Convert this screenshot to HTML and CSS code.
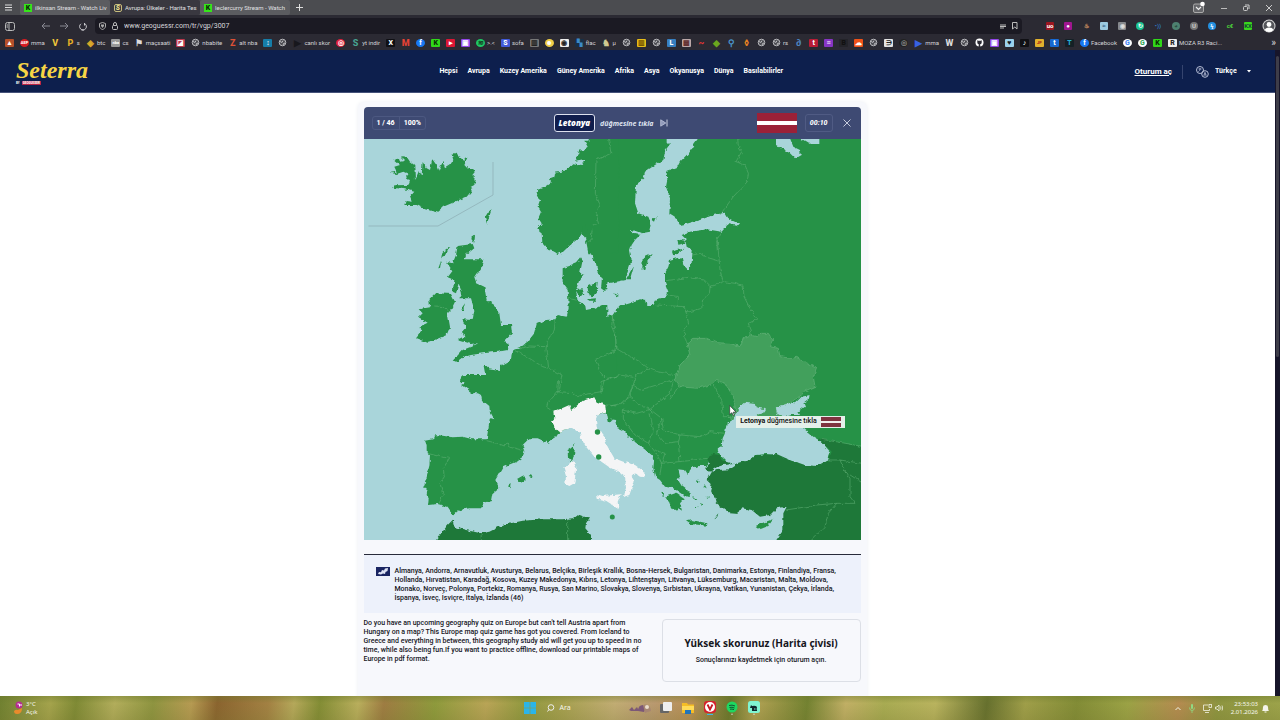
FILE: index.html
```html
<!DOCTYPE html>
<html lang="tr">
<head>
<meta charset="utf-8">
<title>Avrupa: Ülkeler - Harita Testi</title>
<link rel="stylesheet" href="styles.css">
</head>
<body>
<div class="tabs">
  <button class="menu" aria-label="Menü"><svg width="7" height="7" viewBox="0 0 7 7"><path d="M0 1h7M0 3.500h7M0 6h7" stroke="#ddd"/></svg></button>
  <button class="tab"><i class="fav kick">K</i><span>ilkinsan Stream - Watch Liv</span></button>
  <button class="tab active"><i class="fav set">S</i><span>Avrupa: Ülkeler - Harita Tes</span></button>
  <button class="tab"><i class="fav kick">K</i><span>leclercurry Stream - Watch</span></button>
  <button class="plus" aria-label="Yeni sekme"><svg width="7" height="7" viewBox="0 0 7 7"><path d="M0 3.500h7M3.500 0v7" stroke="#ddd"/></svg></button>
  <div class="wincontrols">
    <svg width="12" height="13" viewBox="0 0 12 13"><rect x=".5" y="3" width="10" height="8.500" rx="1.500" fill="#66676b" stroke="#aaa"/><path d="M3 6l2.500 2.500L8 6" fill="none" stroke="#eee" stroke-width="1.200"/><circle cx="9.500" cy="3" r="2.300" fill="#fff"/></svg>
    <svg width="6" height="8" viewBox="0 0 6 8"><path d="M0 4.500h6" stroke="#bbb"/></svg>
    <svg width="7" height="8" viewBox="0 0 7 8"><rect x=".5" y="2.500" width="4" height="4" fill="none" stroke="#ccc" rx="1"/><path d="M2 1h4v4" fill="none" stroke="#ccc"/></svg>
    <svg width="6" height="8" viewBox="0 0 6 8"><path d="M0 1l6 6M6 1L0 7" stroke="#ccc"/></svg>
  </div>
</div>
<div class="toolbar">
  <svg class="side" width="10" height="9" viewBox="0 0 10 9"><rect x=".5" y=".5" width="9" height="8" rx="2" fill="none" stroke="#bbb"/><path d="M4 .5v8M1.500 3h1.500M1.500 5h1.500" stroke="#bbb"/></svg>
  <svg width="9" height="8" viewBox="0 0 9 8"><path d="M9 4H1M4 1L1 4l3 3" fill="none" stroke="#888892"/></svg>
  <svg width="9" height="8" viewBox="0 0 9 8"><path d="M0 4h8M5 1l3 3-3 3" fill="none" stroke="#888892"/></svg>
  <svg width="8" height="9" viewBox="0 0 8 9"><path d="M5.500 1.500A3.400 3.400 0 1 1 2 1.800M5.500 1v2.500M2.500 8L5 8" fill="none" stroke="#c8c8cc"/></svg>
  <div class="url">
    <svg width="7" height="8" viewBox="0 0 7 8"><path d="M.5 1.500L3.500.5l3 1v2.500c0 2-1.500 3-3 3.500-1.500-.5-3-1.500-3-3.500z" fill="none" stroke="#aaa"/><path d="M2 2.500h3v1.500L3.500 6 2 4z" fill="#aaa"/></svg>
    <svg width="6" height="8" viewBox="0 0 6 8"><rect x=".5" y="3.500" width="5" height="4" rx="1" fill="none" stroke="#bbb"/><path d="M1.500 3.500V2a1.500 1.500 0 0 1 3 0v1.500" fill="none" stroke="#bbb"/></svg>
    <input type="text" aria-label="Adres" value="www.geoguessr.com/tr/vgp/3007">
    <svg width="6" height="7" viewBox="0 0 6 7"><path d="M0 2h6M0 3.500h6M0 5h4" stroke="#bbb"/></svg>
    <svg width="6" height="8" viewBox="0 0 6 8"><path d="M.5.500h4.500v6.500L2.800 5 .5 7z" fill="none" stroke="#bbb"/></svg>
  </div>
  <div class="ext">
    <i style="background:#9d1620;color:#fff">uo</i><i style="background:#a01690;color:#fff">●</i><i style="color:#e5a36c">♨</i><i style="background:#9ccbe0;color:#37658a">≈</i><i style="background:#85888c;color:#ddd">◉</i><i class="c" style="background:#1cc391;color:#fff">↻</i><i style="color:#2e72bd">•))</i><i class="c" style="background:#4d8170;color:#2c4f43">◕</i><i class="c" style="background:#777;color:#ccc">U</i><i class="c" style="background:#2390e0;color:#fff">ϟ</i><i style="color:#4bd33a">c€</i><i style="background:#39d51e;color:#143">KX</i>
    <svg width="14" height="14" viewBox="0 0 14 14"><circle cx="7" cy="7" r="6.500" fill="#d9d9d9"/><circle cx="7" cy="7" r="5.500" fill="#55565b"/><circle cx="7" cy="5.500" r="2.400" fill="#fff"/><path d="M2.800 11c.5-3.500 7.900-3.500 8.400 0a5.500 5.500 0 0 1-8.400 0" fill="#fff"/></svg>
  </div>
</div>
<nav class="marks" id="marks" aria-label="Yer imleri"></nav>

<div class="viewport">
  <div class="page">
    <header class="site">
      <a class="logo" href="#"><span class="word">Seterra</span><span class="by"><span>BY</span><b>GEOGUESSR</b></span></a>
      <nav class="links"><a href="#">Hepsi</a><a href="#">Avrupa</a><a href="#">Kuzey Amerika</a><a href="#">Güney Amerika</a><a href="#">Afrika</a><a href="#">Asya</a><a href="#">Okyanusya</a><a href="#">Dünya</a><a href="#">Basılabilirler</a></nav>
      <div class="account">
        <a href="#">Oturum aç</a>
        <label class="lang"><svg width="13" height="12" viewBox="0 0 13 12" fill="none" stroke="#b6bed6"><circle cx="4" cy="4" r="3.500"/><circle cx="9" cy="8" r="3.300"/><path d="M2.500 3h3M4 2v1c0 1.500-.8 2.200-1.500 2.500M7.700 9.600L9 6.300l1.300 3.300M8 9h2" stroke-width=".8"/></svg>
        <select aria-label="Dil"><option>Türkçe</option></select><svg width="4" height="3" viewBox="0 0 4 3"><path d="M0 0h4L2 2.500z" fill="#fff"/></svg></label>
      </div>
    </header>
    <main>
      <section class="panel">
        <div class="game">
          <div class="bar">
            <div class="score"><span>1 / 46</span><span>100%</span></div>
            <div class="ask"><b>Letonya</b><span>düğmesine tıkla</span><button aria-label="Atla"><svg width="8" height="8" viewBox="0 0 8 8"><path d="M.7.800L5.800 4 .7 7.200z" fill="#8f99ba" stroke="#c9cfe2" stroke-width=".7"/><path d="M7 .5v7" stroke="#c9cfe2"/></svg></button></div>
            <div class="right"><i class="flag"></i><span class="time">00:10</span><button aria-label="Kapat"><svg width="8" height="8" viewBox="0 0 8 8"><path d="M.5.500l7 7M7.500.5l-7 7" stroke="#d5d9e8" stroke-width=".9"/></svg></button></div>
          </div>
          <div class="map">
            <svg viewBox="364 139 497 401" role="img" aria-label="Avrupa haritası">
              <defs><filter id="coast" x="0" y="0" width="1" height="1" color-interpolation-filters="sRGB"><feTurbulence type="fractalNoise" baseFrequency=".22" numOctaves="2" seed="4"/><feDisplacementMap in="SourceGraphic" scale="4" xChannelSelector="R" yChannelSelector="G"/></filter></defs>
              <rect x="364" y="139" width="497" height="401" fill="#a9d5da"/>
              <g filter="url(#coast)">
                <rect x="350" y="125" width="525" height="430" fill="#a9d5da"/>
                <g class="land">
                  <rect x="610" y="125" width="270" height="265"/>
                  <g transform="translate(355 100) scale(.33333)">
                    <path d="M103 218L125 215 118 200 135 195 118 180 128 176 138 182 150 180 138 168 155 170 165 185 178 195 180 240 192 212 200 225 203 186 215 205 225 210 232 178 248 200 253 212 262 182 270 205 285 195 295 180 290 162 305 158 315 178 330 182 328 168 337 173 328 192 340 205 360 215 352 225 363 238 358 255 345 262 350 272 335 290 300 305 265 320 245 337 210 328 185 315 148 315 152 303 170 305 165 290 178 275 150 268 115 263 118 256 160 255 165 240 150 235 160 222 145 215 125 222z"/>
                    <path d="M790 90H710L700 122 688 122 698 140 685 150 672 152 665 170 660 185 690 180 680 195 655 190 640 205 620 215 600 218 598 232 582 238 590 248 570 262 550 270 545 290 555 300 548 320 558 335 550 355 560 370 550 385 560 400 562 430 580 450 620 460 650 430 672 405 678 392 690 410 700 460H790z"/>
                    <path d="M390 352L400 335 410 328 402 352 396 372z"/>
                  </g>
                  <g transform="translate(356 230) scale(.33333)">
                    <path d="M550 5L565 15 558 25 575 50 605 72 625 60 650 40 672 20 680 2V-15H550zM688-15L700 50 705 75 718 95 725 125 738 145 735 175 745 182 768 178V-15z"/>
                    <path d="M782 240H768L755 225 735 225 715 235 690 240 688 228 665 215 660 180 670 150 685 135 672 130 680 90 675 82 660 100 640 108 620 115 620 160 635 180 637 210 638 235 632 260 605 255 598 268 570 270 542 282 535 310 515 335 490 355 468 362 465 390 432 408 432 420 398 415 392 408 383 408 390 445 360 450 350 443 312 450 325 460 315 465 330 475 350 490H782z"/>
                    <path d="M658 180L680 178 685 195 670 198zM692 172L725 155 722 185 710 200 695 190zM690 208L720 205 718 215 700 215z"/>
                    <path d="M305 48L350 42 355 55 330 75 325 88 382 88 375 115 355 145 360 158 385 170 392 210 415 225 430 250 435 285 465 285 468 310 445 335 460 345 455 360 425 365 380 370 345 375 325 380 305 395 290 392 320 360 345 350 367 340 345 342 305 330 325 320 318 305 330 292 318 268 350 270 355 240 345 205 310 205 318 190 308 160 300 190 290 185 295 150 275 142 290 122 270 95 290 100 300 75z"/>
                    <path d="M188 238L222 232 220 210 240 190 285 192 297 215 285 240 275 250 282 290 272 315 215 338 180 325 200 300 190 290 215 278 188 262 200 250zM260 65L280 50 265 80 256 85zM247 115L256 90 252 115zM346 20L357 12 355 38 348 30zM313 240L327 220 322 240z"/>
                  </g>
                  <g transform="translate(356 380) scale(.33333)">
                    <path d="M320-15L312 0 325 8 330 25 350 30 375 45 378 60 400 78 402 100 412 118 402 115 392 178 350 178 320 170 290 172 250 166 235 166 230 178 207 182 212 195 212 215 222 222 220 260 210 300 202 322 215 325 212 345 218 355 216 375 245 372 275 380 292 405 310 390 340 385 375 385 385 368 408 362 412 340 430 325 418 300 440 262 480 245 500 230 505 215 500 195 520 175 545 175 575 188 600 172 610 155 640 145 700 110 750 100 755 125 765 122 770 112 782 120V-15z"/>
                    <path d="M635 210L650 200 653 188 656 215 648 247 636 235zM483 297L500 287 510 297 498 308zM518 288L530 292 525 282zM456 318L464 312 462 325z"/>
                  </g>
                  <g transform="translate(610 380) scale(.33333)">
                    <path d="M0-15V118L15 120 20 140 40 150 60 175 100 205 125 225 132 245 130 265 135 290 150 300 165 320 190 325 220 345 240 352 238 335 215 318 203 298 210 290 205 268 225 270 235 285 240 270 250 262 270 258 290 258 300 240 400 250H780V-15z"/>
                    <path d="M165 350L200 338 224 355 210 370 216 392 205 385 198 396 190 385 184 390 180 372zM228 424L245 420 292 430 290 437 240 432zM437 438L455 430 490 417 475 438 450 448zM152 335L162 340 160 350zM245 345L262 360 258 364zM262 300L270 306 262 308zM255 380L262 378 260 386zM290 350L296 350 293 358zM270 370L278 372 272 378zM285 315L290 325 280 322z"/>
                  </g>
                </g>
                <path class="ukr" transform="translate(610 240) scale(.33333)" d="M232 315L250 295 290 295 320 308 360 310 390 320 400 295 420 285 440 290 450 280 475 280 488 300 478 320 505 325 510 350 545 355 560 352 590 370 620 385 610 410 615 440 580 455 575 465 540 488 498 502 505 522 545 535 490 552 440 530 375 545 355 535 378 520 370 470 345 430 320 422 300 435 262 445 210 440 193 420 210 375 240 345z"/>
                <g fill="#a9d5da">
                  <path transform="translate(610 100) scale(.33333)" d="M170 80V125L180 135 165 155 160 180 135 195 105 215 100 235 78 255 75 310 85 340 115 350 125 375 120 395 95 400 75 392 55 390 75 402 90 405 75 420 65 435 60 450 65 480 55 510 45 540 20 545-8 550V650L8 645 25 620 60 610 90 598 108 600 112 615 130 615 140 598 170 590 175 575 165 550V520L175 500 180 480 205 473 215 475 220 495 235 510 245 490 248 450 230 440 225 415 215 405 240 395 290 388 335 395 355 372 380 378 387 370 355 355 345 338 310 345 270 360 235 370 210 375 195 350 178 340 180 295 168 260 172 240 170 215 200 205 210 185 235 160 250 135 272 105V80zM498 90V135L540 160 555 175 572 165 570 150 550 140 530 90zM575 90V117L600 132 628 132V90z"/>
                  <path transform="translate(610 380) scale(.33333)" d="M345 160L350 130 372 115 385 85 405 68 435 72 437 82 468 88 460 98 440 105 470 135 500 135 545 118 570 130 580 145 610 170 635 185 660 215 655 240 620 258 585 255 540 240 510 230 470 222 440 225 420 240 360 255 330 225 322 205 335 200 338 175zM498 82L540 68 555 70 575 50 600 45 602 52 580 68 585 80 565 95 570 105 545 105 520 112 500 100z"/>
                </g>
                <path class="land" transform="translate(610 240) scale(.33333)" d="M98 55L125 42 112 65 105 90 97 85zM48 118L72 75 60 118zM13 160L27 168 18 172zM186 35L200 30 224 26 205 40 190 47zM203 2L220-3 227 10 205 14zM125-62L140-68 135-55z"/>
                <g class="dark">
                  <path transform="translate(356 380) scale(.33333)" d="M225 500L275 435 290 420 295 440 330 450 375 460 400 455 440 435 500 422 560 418 620 418 650 415 665 403 685 410 702 412 690 430 688 445 705 465V500z"/>
                  <path transform="translate(610 380) scale(.33333)" d="M290 235L310 222 328 225 335 240 372 252 340 255 320 262 300 275 285 265 300 250zM300 280L320 270 360 268 375 258 380 250 420 240 440 226 500 222 540 240 585 255 620 258 655 240 665 215 635 185 625 175 790 208V500H485L520 450 520 400 530 380 500 385 480 405 450 410 425 390 395 385 385 402 360 400 320 370 315 350 300 335 305 315 290 300zM313 415L325 400 322 410z"/>
                </g>
                <g fill="#f4f5f6" transform="translate(356 380) scale(.33333)">
                  <path d="M592 95L618 85 640 75 645 90 665 75 680 62 715 52 722 65 748 75 750 98 725 105 720 120 722 140 745 170 755 200 775 235 802 245 837 255 865 275 865 292 852 290 837 280 827 290 836 305 829 320 820 345 804 350 810 320 807 290 787 275 760 262 715 230 690 200 675 175 672 155 640 145 610 155 595 140 585 125 595 115zM622 260L635 258 652 243 661 260 655 310 640 318 628 312 630 285zM723 343L740 348 794 343 785 365 788 388 770 375 750 362 725 356z"/>
                </g>
                <g class="borders">
                  <path transform="translate(356 100) scale(.33333)" d="M755 100L765 160 720 180 718 280 730 310 720 340 728 370 710 375 705 420 697 425"/>
                  <path transform="translate(610 100) scale(.33333)" d="M382 100L385 140 395 155 378 185 405 195 415 220 412 245 370 290 330 345M335 395L320 420 322 450"/>
                  <path transform="translate(356 230) scale(.33333)" d="M598 268L595 300 575 330 570 360 575 390 578 415 618 435 608 490M490 357L520 348 570 350M480 362L520 385 560 410 578 415M768 255L775 290 780 340 775 365 718 388 735 430 755 448 735 455V490M637 205L660 210M238 228L262 230 278 243M755 448L785 440"/>
                  <path transform="translate(610 240) scale(.33333)" d="M248 45L270 40 290 52 325 62M322 0L327 55 330 90 340 125 300 140 280 120 235 112 200 118 168 122M340 125L375 130 400 140 402 170 420 205 442 238 415 250 425 288M300 140L298 160 278 180 275 205 240 215 228 215 222 200 140 195M205 198V170L175 165M228 215L236 250 220 275 232 315M8 225L5 260 18 290V325L0 340M18 325L60 350 90 365 115 385 140 395 200 405M115 385L75 410 70 435 90 450 140 435 190 420M0 418L30 405 70 412M70 435L50 478M205 440L180 478"/>
                  <path transform="translate(356 380) scale(.33333)" d="M608 0L605 35 575 70 572 82 592 95M605 35L650 38 665 50 680 45 735 35 745 0M750 75L782 78M392 182L430 192 445 198A7 7 0 1 1 458 200L505 212M222 222L245 228 280 235 262 265 265 290 252 310 262 345 248 372M375 460L377 490M635 418V490"/>
                  <path transform="translate(610 380) scale(.33333)" d="M70 0L60 50 35 70 0 78M60 50L90 75 120 88 180 40 190 5M120 88L155 115 160 150 210 165 270 170 300 155 345 160M310 15L335 60 340 110 358 110M40 90V120L75 165 115 190M40 90L80 100 120 88M120 100L130 150 115 190 135 215 155 250 150 285M155 115L140 160 165 190 205 185 210 165M135 210L165 220 155 250 210 245 205 185M210 245L290 235M655 240L690 240 705 275 720 295V350L735 370 680 370 620 375 560 385 528 390M690 240L790 255M680 370L655 400 645 440 605 480M705 275L790 330M635 178L790 205"/>
                </g>
              </g>
              <path d="M368.500 226H438L493 195V162" fill="none" stroke="#8fb1b7" stroke-width=".8"/>
              <g class="land"><circle cx="597.500" cy="432" r="2.700"/><circle cx="598.700" cy="457" r="2.700"/><circle cx="612.300" cy="517" r="2.500"/></g>
            </svg>
            <svg class="cursor" width="8" height="11" viewBox="0 0 7 10"><path d="M.5.500v8L2.500 7l1.300 2.600 1-.5L3.600 6.500h2.700z" fill="#fff" stroke="#333" stroke-width=".6"/></svg>
            <div class="tip"><span><b>Letonya</b> düğmesine tıkla</span><i class="flag small"></i></div>
          </div>
        </div>
        <div class="countries">
          <svg width="14" height="9" viewBox="0 0 14 9"><rect width="14" height="9" fill="#1a2562"/><path d="M2 7l1-2 2 .3L6 3l2 .5L9 1.500l3-.5-.5 3-2 1-.5 2-2-.6L5 7.600z" fill="#dfe4f5"/></svg>
          <p>Almanya, Andorra, Arnavutluk, Avusturya, Belarus, Belçika, Birleşik Krallık, Bosna-Hersek, Bulgaristan, Danimarka, Estonya, Finlandiya, Fransa,<br>Hollanda, Hırvatistan, Karadağ, Kosova, Kuzey Makedonya, Kıbrıs, Letonya, Lihtenştayn, Litvanya, Lüksemburg, Macaristan, Malta, Moldova,<br>Monako, Norveç, Polonya, Portekiz, Romanya, Rusya, San Marino, Slovakya, Slovenya, Sırbistan, Ukrayna, Vatikan, Yunanistan, Çekya, İrlanda,<br>İspanya, İsveç, İsviçre, İtalya, İzlanda (46)</p>
        </div>
        <div class="about">
          <p>Do you have an upcoming geography quiz on Europe but can't tell Austria apart from<br>Hungary on a map? This Europe map quiz game has got you covered. From Iceland to<br>Greece and everything in between, this geography study aid will get you up to speed in no<br>time, while also being fun.If you want to practice offline, download our printable maps of<br>Europe in pdf format.</p>
          <div class="card"><h2>Yüksek skorunuz (Harita çivisi)</h2><p>Sonuçlarınızı kaydetmek için oturum açın.</p></div>
        </div>
      </section>
    </main>
  </div>
  <div class="scroll"><i></i></div>
</div>

<footer class="taskbar">
  <div class="weather"><svg width="10" height="14" viewBox="0 0 10 14"><circle cx="5" cy="4" r="3.500" fill="#b52d92"/><path d="M3.500 3h2v2.500M7 3v2" stroke="#fff" fill="none"/><path d="M0 10q2-2 4-1l4-2q0 6-5 6-3 0-3-3" fill="#e98b2c"/></svg><span>3°C<br>Açık</span></div>
  <div class="apps">
    <svg width="12" height="12" viewBox="0 0 12 12"><path d="M0 0h5.700v5.700H0zM6.300 0H12v5.700H6.300zM0 6.300h5.700V12H0zM6.300 6.300H12V12H6.300z" fill="#2bb5e8"/></svg>
    <button class="search"><svg width="8" height="8" viewBox="0 0 8 8"><circle cx="4" cy="3.500" r="2.800" fill="none" stroke="#eee"/><path d="M2 5.500L.5 7.500" stroke="#eee"/></svg>Ara</button>
    <svg class="art" width="25" height="12" viewBox="0 0 25 12"><path d="M0 8l3-3 2 3 3-3 2 4H2zM9 9q0-6 5-6l3 3-2 4z" fill="#7c5877"/><path d="M14 3q7-2 8 6l-6 2z" fill="#a78672"/><circle cx="18" cy="5" r="2" fill="#eadccc"/></svg>
    <svg width="12" height="12" viewBox="0 0 12 12"><rect y="2" width="9" height="9" rx="1" fill="#666"/><rect x="3" width="9" height="9" rx="1" fill="#eee"/></svg>
    <svg width="12" height="12" viewBox="0 0 12 12"><path d="M0 1h5l1 1.500h6V11H0z" fill="#f5bd25"/><path d="M0 4h12v4H0z" fill="#ffdb58"/><path d="M3 8h6v4H3z" fill="#2274b9"/></svg>
    <svg width="12" height="14" viewBox="0 0 12 14"><rect width="12" height="12" rx="3" fill="#d5222c"/><circle cx="6" cy="6" r="5" fill="#fff"/><path d="M3.500 3.500L6 8.500l2.500-5" fill="none" stroke="#c41924" stroke-width="1.800"/><path d="M3 13.500h6" stroke="#43b3e8"/></svg>
    <svg width="12" height="14" viewBox="0 0 12 14"><circle cx="6" cy="6" r="5.500" fill="#1ed760"/><path d="M3 4.500q3-1 6 .5M3.500 6.500q2.500-.8 5 .5M4 8.200q2-.5 4 .4" fill="none" stroke="#153"/><circle cx="6" cy="13.300" r=".7" fill="#ddd"/></svg>
    <svg width="12" height="14" viewBox="0 0 12 14"><rect width="12" height="12" rx="2.500" fill="#80f5d2"/><path d="M3 4l1 1q5-1 5 2v3H4V7H2z" fill="#10272d"/><path d="M6 8h1M7.500 8h1" stroke="#80f5d2"/><circle cx="6" cy="13.300" r=".7" fill="#ddd"/></svg>
  </div>
  <div class="tray">
    <svg width="6" height="5" viewBox="0 0 6 5"><path d="M.5 4L3 1.500 5.500 4" fill="none" stroke="#f2f2e5"/></svg>
    <svg width="6" height="9" viewBox="0 0 6 9"><rect x="2" y="0" width="2" height="5" rx="1" fill="#8fdc84"/><path d="M.5 3.500q0 3 2.500 3t2.500-3M3 6.500V9" fill="none" stroke="#8fdc84" stroke-width=".8"/></svg>
    <div class="net"><svg width="9" height="9" viewBox="0 0 9 9" fill="none" stroke="#f2f2e5" stroke-width=".8"><path d="M5 1H.5v5.500h6V5M2 8.500h4"/><rect x="6" y=".5" width="2.500" height="3"/></svg><svg width="8" height="8" viewBox="0 0 8 8" fill="none" stroke="#f2f2e5" stroke-width=".8"><path d="M.5 3h1.500l2-2v6L2 5H.5zM5.500 2.500q1 1.500 0 3M7 1.500q1.500 2.500 0 5"/></svg></div>
    <span>23:53:03<br>2.01.2026</span>
    <svg width="7" height="9" viewBox="0 0 7 9"><path d="M0 7q1-1 1-4 0-2 2.500-2T6 3q0 3 1 4zM2.500 7.500h2v1h-2z" fill="#f4f4ea"/></svg>
  </div>
</footer>
<script src="marks.js"></script>
</body>
</html>
```
FILE: marks.js
```js
// [glyph, background, colour, label, round]
const marks = [
 ['▲','#b5502a','#fff'],['AEP','#d71d22','#fff','mma',1],['V','','#f0c53a'],['P','','#e7ae25','s'],['◈','','#d9a829','btc'],
 ['nba','#999','#fff','cs'],['⚑','','#ddd','maçsaati'],['◪','#b9394d','#fff'],['globe','','','nbabite'],['Z','','#dd5136','alt nba'],
 ['↕','#167da8','#fff'],['globe'],['▶','','#17171d','canlı skor'],['◎','#e3213c','#fff','',1],['S','','#47a391','yt indir'],
 ['X','#101014','#fff'],['M','','#e94335'],['f','#1877f2','#fff','',1],['K','#30d818','#082b04'],['▸','#dc1735','#fff'],
 ['▣','#9146e8','#fff'],['≋','#1ec864','#15391f','>.<',1],['S','#4159d8','#fff','sofa'],['▥','#777','#222'],['☻','#f1ce47','#fff','',1],
 ['◉','#eee','#222'],['▚','#173048','#3c8ac7','flac'],['♞','','#d1c990','µ'],['globe'],['▥','#e6bc19','#765700'],['globe'],
 ['L','#377fc0','#fff'],['▩','#bba8a8','#633'],['~','','#de3434'],['◆','','#6ca61e'],['⚲','','#4a95cb'],['◊','','#e78222'],
 ['globe'],['globe','','','rs'],['∂','','#4d83bf'],['t','#b81d36','#fff'],['≡','#8735c4','#fff'],['B','#232329','#111'],
 ['☁','#f05218','#fff'],['globe'],['∋','#e4e4e4','#222'],['◎','#222','#888','',1],['▶','','#3862e3','mma'],['W','','#ddd'],
 ['globe'],['git'],['▣','#9146e8','#fff'],['♥','#9bd2ed','#101820'],['♪','#101014','#fff'],['JP','#e2b12d','#a41616'],
 ['t','#1769d2','#fff'],['T','#152026','#25afd5'],['f','#1877f2','#fff','Facebook',1],['G','#fff','#4285f4','',1],
 ['G','#fff','#34a853','',1],['K','#30d818','#082b04'],['R','#eee','#222','MOZA R3 Raci...']
];
const globe = '<svg width="9" height="9" viewBox="0 0 9 9"><circle cx="4.500" cy="4.500" r="3.300" fill="#4d4d53" stroke="#b8b8bc"/><path d="M2 3.500l2 1 1-2M5 7l1-2 1.500.5" fill="none" stroke="#b8b8bc"/></svg>';
const git = '<svg width="9" height="9" viewBox="0 0 9 9"><circle cx="4.500" cy="4.500" r="4" fill="#fff"/><path d="M2.300 2.200l1 .5h2.400l1-.5v2.300q0 1.500-1.500 1.700V9H3.700V6.200Q2.300 6 2.300 4.500z" fill="#2b2a33"/></svg>';
document.getElementById('marks').innerHTML = marks.map(([g, bg, fg, label, round]) =>
 `<a href="#"${label ? '' : ' aria-label="Yer imi"'}>${g === 'globe' ? globe : g === 'git' ? git :
 `<i class="${round ? 'round' : ''}${bg ? '' : ' bare'}${g.length > 1 ? ' tiny' : ''}" style="background:${bg || 'none'};color:${fg}">${g}</i>`}${label ? `<span>${label.replace('<', '&lt;')}</span>` : ''}</a>`
).join('') + '<button class="more">»</button>';
```
FILE: styles.css
```css
* { box-sizing: border-box; }
body { margin: 0; height: 100vh; display: flex; flex-direction: column; overflow: hidden; font-family: Roboto, "Noto Sans", sans-serif; font-weight: 500; font-size: 7px; line-height: 9px; color: #15161c; }
button, input, select { font: inherit; color: inherit; background: none; border: 0; padding: 0; margin: 0; }
a { color: inherit; text-decoration: none; }
i { font-style: normal; }
p, h2 { margin: 0; }
svg { flex: none; display: block; }

.tabs { display: flex; align-items: center; height: 15px; flex: none; background: #4b4c50; color: #e0e0e3; padding-left: 5px; }
.menu { width: 15px; }
.tab { display: flex; align-items: center; gap: 3px; width: 90px; height: 15px; padding: 0 2px 0 4px; background: #5b5c60; border-radius: 2px; white-space: nowrap; font-weight: 400; font-size: 6px; }
.tab.active { background: #393840; }
.fav { width: 8px; height: 8px; flex: none; font-size: 7px; line-height: 8px; font-weight: 900; text-align: center; }
.kick { background: #36e51a; color: #092d05; }
.set { border: 1px solid #c7bd7c; border-radius: 2px; color: #e4d787; line-height: 6px; font-style: italic; }
.plus { margin-left: 6px; }
.wincontrols { margin-left: auto; padding-right: 8px; display: flex; align-items: center; gap: 16px; }

.toolbar { display: flex; align-items: center; gap: 10px; height: 20px; flex: none; background: #2b2a33; padding: 2px 4px 0 5px; }
.side { margin-right: 16px; }
.url { flex: 1; display: flex; align-items: center; gap: 6px; height: 16px; background: #1b1a23; border-radius: 4px; padding: 0 4px; margin-left: -2px; color: #d7d7db; }
.url input { flex: 1; font-weight: 400; outline: 0; }
.ext { display: flex; align-items: center; gap: 10px; margin-left: 14px; }
.ext i { width: 8px; height: 8px; line-height: 8px; font-size: 6px; font-weight: 700; text-align: center; border-radius: 1px; }
.ext .c { border-radius: 50%; }

.marks { display: flex; align-items: center; gap: 6px; height: 15px; flex: none; padding: 0 4px 0 5px; background: #2b2a33; color: #d4d4d8; font-weight: 400; font-size: 6px; white-space: nowrap; }
.marks a { display: flex; align-items: center; gap: 2px; flex: none; }
.marks i { width: 9px; height: 8px; line-height: 8px; font-size: 7px; font-weight: 800; text-align: center; border-radius: 1px; }
.marks .round { border-radius: 50%; }
.marks .bare { font-size: 9px; }
.marks .tiny { font-size: 4px; }
.more { margin-left: auto; font-size: 10px; }

.viewport { flex: 1; min-height: 0; display: flex; background: #fff; }
.page { flex: 1; min-width: 0; overflow: hidden; }
.scroll { width: 5px; background: #17152a; padding: 6px 1px 0; }
.scroll i { display: block; height: 47%; background: #3e3d49; border-radius: 2px; }

.site { display: flex; justify-content: space-between; align-items: center; height: 43px; padding: 1px 24px 0 16px; background: #0d1f4d; color: #fff; border-bottom: 1px solid #45527a; font-weight: 700; }
.logo { display: flex; flex-direction: column; width: 72px; }
.word { font: italic 700 24px/22px "Liberation Serif", serif; color: #f7d545; white-space: nowrap; }
.by { display: flex; gap: 2px; font-size: 3px; line-height: 4px; }
.by b { background: #b92343; padding: 0 1px; }
.links { display: flex; gap: 10px; }
.account { display: flex; align-items: center; gap: 10px; }
.account > a { text-decoration: underline; font-size: 8px; }
.lang { display: flex; align-items: center; gap: 6px; border-left: 1px solid #35446e; padding-left: 13px; height: 14px; }
.lang select { appearance: none; font-weight: 700; margin-right: 4px; }

main { display: flex; justify-content: center; padding: 9px 51px 0 0; }
.panel { width: 509px; min-height: 640px; padding: 5px 6px; background: #f7f8fc; border-radius: 6px; box-shadow: 0 0 4px #eceef3; }
.bar { display: grid; grid-template-columns: 1fr auto 1fr; align-items: center; height: 32px; padding: 0 10px 0 8px; background: #3e4a73; color: #fff; border-radius: 4px 4px 0 0; }
.score { display: flex; justify-self: start; border: 1px solid #4c5881; border-radius: 3px; font-weight: 800; line-height: 12px; }
.score span { padding: 0 4px; }
.score span + span { border-left: 1px solid #4c5881; }
.ask { display: flex; align-items: center; gap: 5px; font-style: italic; font-weight: 700; color: #dfe3f0; white-space: nowrap; font-family: "Noto Sans", sans-serif; }
.ask b { background: #101d4c; border: 1px solid #dce0ee; border-radius: 3px; padding: 3px 4px; font-size: 8px; line-height: 10px; color: #fff; }
.ask button { margin-left: 2px; }
.right { display: flex; align-items: center; justify-self: end; gap: 8px; }
.flag { width: 40px; height: 20px; background: linear-gradient(#9b2138 40%, #fff 40% 60%, #9b2138 60%); }
.time { border: 1px solid #505b84; border-radius: 3px; padding: 3px 4px; font-style: italic; font-weight: 800; line-height: 10px; }
.right button { margin-left: 2px; }
.map { position: relative; }
.map > svg:first-child { width: 100%; height: auto; }
.land { fill: #269247; }
.dark { fill: #1e7839; }
.ukr { fill: #42a05c; stroke: #66b37b; stroke-width: 2; }
.borders { fill: none; stroke: #64b378; stroke-width: 1.600; }
.cursor { position: absolute; left: 73.600%; top: 66.400%; }
.tip { position: absolute; left: 75%; top: 69%; display: flex; align-items: center; gap: 4px; height: 12px; padding: 0 4px; background: #e4f0ea; white-space: nowrap; color: #111; }
.flag.small { width: 20px; height: 10px; background: linear-gradient(#7f3440 40%, #f2eeee 40% 60%, #7f3440 60%); }

.countries { display: flex; gap: 5px; margin-top: 14px; padding: 12px 12px 10px; border-top: 1px solid #282b3a; background: #edf1fb; white-space: nowrap; }
.about { display: flex; justify-content: space-between; align-items: flex-start; margin-top: 6px; white-space: nowrap; }
.card { flex: none; width: 40%; height: 63px; border: 1px solid #dcdfe6; border-radius: 4px; text-align: center; padding-top: 16px; }
.card h2 { font-family: "Noto Sans", sans-serif; font-size: 10px; line-height: 14px; margin-bottom: 6px; }

.taskbar { display: grid; grid-template-columns: 1fr auto 1fr; align-items: center; height: 24px; flex: none; color: #f7f7ee; font-family: "Noto Sans", sans-serif; font-weight: 400; font-size: 6px; line-height: 8px; padding: 0 11px 0 14px;
  background: linear-gradient(180deg, #6d7a2e66, transparent 30%, #70702a33), linear-gradient(97deg, #6f8030, #a4a34c 4%, #7f8a35 6%, #b2ad5b 9%, #8e9440 12%, #b69a52 15%, #8b642f 17%, #a38143 21%, #b5a85a 23%, #838d35 25%, #b9ae5c 28%, #9e7c42 30%, #8e9a3c 34%, #b9a456 38%, #91993f 41%, #a6a050 44%, #c1ac73 48%, #b99970 51%, #b88f55 54%, #6a762c 57%, #b1a153 59%, #738231 63%, #c1af65 66%, #a8ab52 69%, #b9b35e 73%, #66702e 77%, #9f9e49 80%, #828c36 84%, #9ba245 88%, #b48b50 92%, #8e9540 95%, #9ca34a); }
.weather { display: flex; align-items: center; gap: 2px; }
.apps { display: flex; align-items: center; gap: 10px; }
.search { display: flex; align-items: center; gap: 5px; width: 82px; padding-left: 1px; font-size: 7px; margin-right: -9px; }
.art { margin-right: -4px; }
.tray { display: flex; align-items: center; justify-self: end; gap: 8px; text-align: right; }
.net { display: flex; gap: 3px; }
.tray span + svg { margin-left: -4px; }
```
